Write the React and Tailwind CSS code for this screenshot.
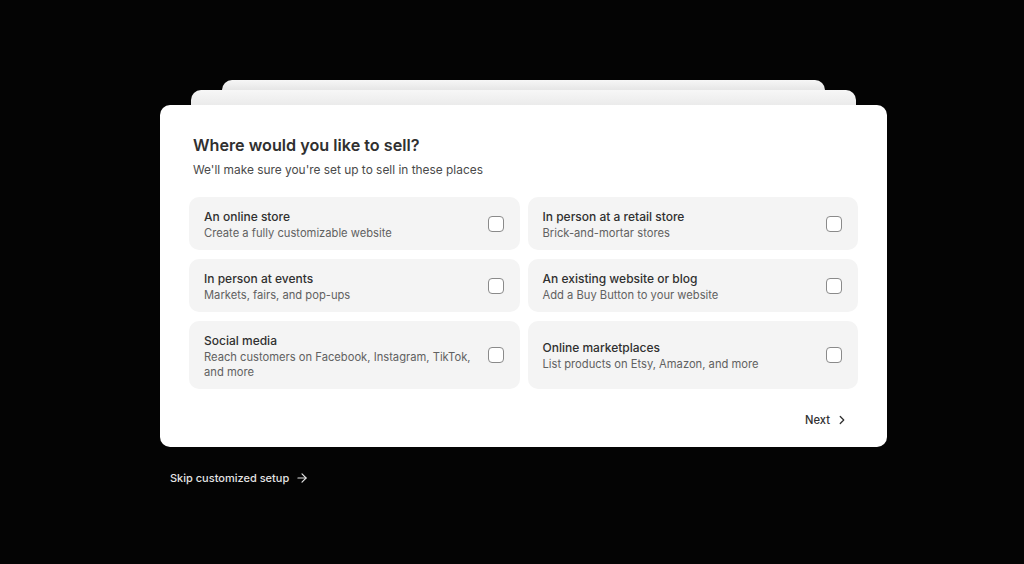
import { ChevronRight, ArrowRight } from "lucide-react";

const options = [
  { title: "An online store", desc: "Create a fully customizable website" },
  { title: "In person at a retail store", desc: "Brick-and-mortar stores" },
  { title: "In person at events", desc: "Markets, fairs, and pop-ups" },
  { title: "An existing website or blog", desc: "Add a Buy Button to your website" },
  { title: "Social media", desc: "Reach customers on Facebook, Instagram, TikTok, and more" },
  { title: "Online marketplaces", desc: "List products on Etsy, Amazon, and more" },
];

const Option = ({ title, desc }) => (
  <label className="flex items-center justify-between gap-4 rounded-[10px] bg-[#f4f4f4] pl-[15px] pr-[16px] py-[9.5px] cursor-pointer">
    <div className="flex flex-col">
      <span className="text-[12px] leading-[19px] font-medium text-[#303030]">{title}</span>
      <span className="text-[11.2px] leading-[15px] text-[#616161]">{desc}</span>
    </div>
    <span className="shrink-0 w-[16px] h-[16px] rounded-[4px] border border-[#8a8a8a] bg-white" />
  </label>
);

export default function App() {
  return (
    <div
      className="min-h-[564px] w-full bg-[#040404] flex flex-col items-center pt-[80px] pl-[23px]"
      style={{ fontFamily: "Inter, 'Noto Sans', sans-serif" }}
    >
      <div className="w-[727px] flex flex-col items-center">
        <div className="w-[603px] h-[10px] rounded-t-[10px] bg-gradient-to-b from-[#f7f7f7] to-[#e6e6e6]" />
        <div className="w-[665px] h-[15px] rounded-t-[10px] bg-gradient-to-b from-[#f7f7f7] to-[#ebebeb]" />
        <div className="w-full rounded-[10px] bg-white px-[29px] pt-[28px] pb-[14px]">
          <div className="pl-[4px]">
            <h1 className="text-[16.2px] leading-[24px] font-semibold text-[#303030]">
              Where would you like to sell?
            </h1>
            <p className="mt-[5px] text-[11.9px] leading-[16px] text-[#4a4a4a]">
              We'll make sure you're set up to sell in these places
            </p>
          </div>
          <div className="mt-[19px] grid grid-cols-2 gap-x-[8px] gap-y-[9px]">
            {options.map((o) => (
              <Option key={o.title} {...o} />
            ))}
          </div>
          <div className="mt-[19px] flex justify-end">
            <button className="flex items-center gap-[5px] pl-[10px] pr-[9px] py-[4px] text-[11.2px] font-medium text-[#303030]">
              Next
              <ChevronRight size={14} strokeWidth={2.2} />
            </button>
          </div>
        </div>
        <div className="w-full pt-[23px] pl-[10px]">
          <button className="flex items-center gap-[6px] text-[11px] font-medium text-[#e3e3e3]">
            Skip customized setup
            <ArrowRight size={14} strokeWidth={2} />
          </button>
        </div>
      </div>
    </div>
  );
}
